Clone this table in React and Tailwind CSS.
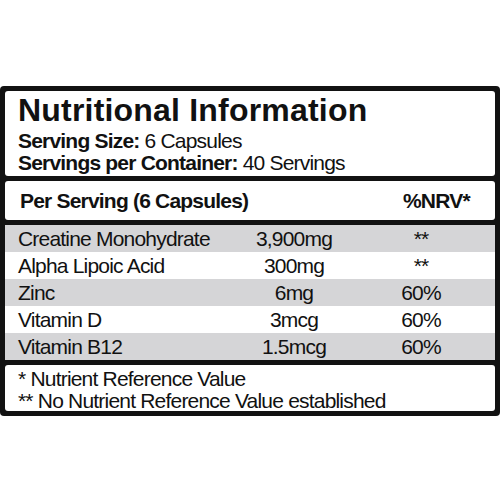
const rows = [
  { name: "Creatine Monohydrate", amount: "3,900mg", nrv: "**", shade: true },
  { name: "Alpha Lipoic Acid", amount: "300mg", nrv: "**", shade: false },
  { name: "Zinc", amount: "6mg", nrv: "60%", shade: true },
  { name: "Vitamin D", amount: "3mcg", nrv: "60%", shade: false },
  { name: "Vitamin B12", amount: "1.5mcg", nrv: "60%", shade: true },
];

const font = { fontFamily: '"Liberation Sans", Arial, sans-serif' };

export default function App() {
  return (
    <div className="w-[500px] h-[500px] bg-white text-[#111]" style={font}>
      <div className="pt-[86px]">
        <div className="bg-[#121212] rounded-[4px] p-[5px] flex flex-col gap-[5px]">
          {/* heading */}
          <div className="bg-white rounded-[3px] h-[85px] pl-[13px]">
            <h1 className="text-[32px] font-bold leading-[38px] tracking-[0.2px]">
              Nutritional Information
            </h1>
            <p className="text-[21px] leading-[22px] tracking-[-0.8px] mt-[1px]">
              <b>Serving Size:</b> 6 Capsules
            </p>
            <p className="text-[21px] leading-[22px] tracking-[-0.8px]">
              <b>Servings per Container:</b> 40 Servings
            </p>
          </div>

          {/* column header */}
          <div className="bg-white rounded-[3px] h-[39px] flex items-center font-bold text-[21px] tracking-[-0.8px]">
            <span className="pl-[15px] flex-1">Per Serving (6 Capsules)</span>
            <span className="w-[92px]">%NRV*</span>
          </div>

          {/* nutrient rows */}
          <div className="bg-white rounded-[3px] flex flex-col">
            {rows.map((r) => (
              <div
                key={r.name}
                className={`h-[27px] flex items-center text-[21px] tracking-[-0.8px] ${
                  r.shade ? "bg-[#d5d5d7]" : "bg-white"
                }`}
              >
                <span className="pl-[13px] w-[244px]">{r.name}</span>
                <span className="w-[90px] text-center">{r.amount}</span>
                <span className="w-[72px] ml-[46px] text-center">{r.nrv}</span>
              </div>
            ))}
          </div>

          {/* footnotes */}
          <div className="bg-white rounded-[3px] h-[46px] pl-[13px] pt-[3px] text-[21px] leading-[22px] tracking-[-0.8px]">
            <p>* Nutrient Reference Value</p>
            <p>** No Nutrient Reference Value established</p>
          </div>
        </div>
      </div>
    </div>
  );
}
